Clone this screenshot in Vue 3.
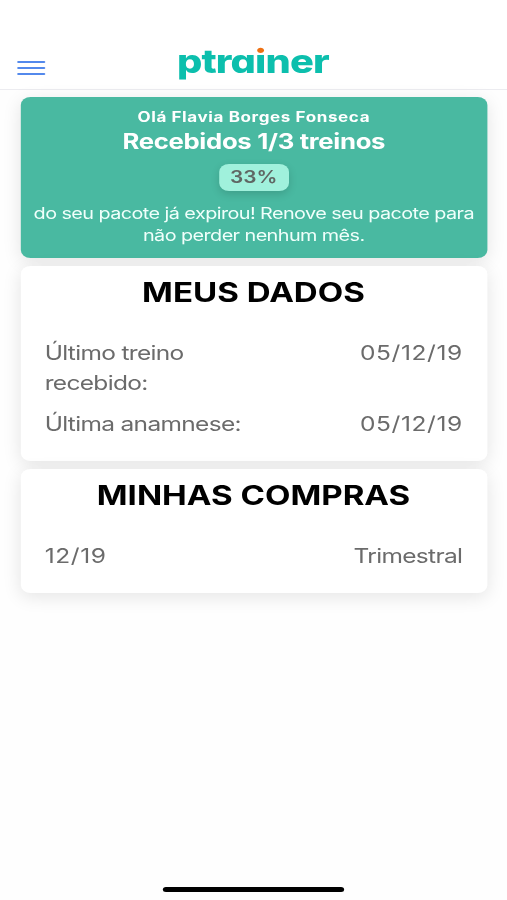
<template>
  <div class="screen">
    <header class="toolbar">
      <button class="menu-button" aria-label="Menu">
        <span v-for="i in 3" :key="i" class="menu-line"></span>
      </button>
      <div class="logo">ptra<span class="logo-i">i</span>ner</div>
    </header>

    <main class="content">
      <section class="card status-card">
        <div class="greeting">Olá {{ user.name }}</div>
        <div class="received">Recebidos {{ user.received }}/{{ user.total }} treinos</div>
        <div class="badge">{{ percent }}%</div>
        <p class="notice">do seu pacote já expirou! Renove seu pacote para não perder nenhum mês.</p>
      </section>

      <section v-for="section in sections" :key="section.title" class="card data-card">
        <h2>{{ section.title }}</h2>
        <div v-for="row in section.rows" :key="row.label" class="data-row">
          <span class="label" :class="{ numeric: isNumeric(row.label) }">{{ row.label }}</span>
          <span class="value" :class="{ numeric: isNumeric(row.value) }">{{ row.value }}</span>
        </div>
      </section>
    </main>

    <footer class="home-bar">
      <div class="home-indicator"></div>
    </footer>
  </div>
</template>

<script setup>
import { computed, reactive } from 'vue'

const user = reactive({
  name: 'Flavia Borges Fonseca',
  received: 1,
  total: 3
})

const percent = computed(() => Math.round((user.received / user.total) * 100))

const sections = [
  {
    title: 'MEUS DADOS',
    rows: [
      { label: 'Último treino recebido:', value: '05/12/19' },
      { label: 'Última anamnese:', value: '05/12/19' }
    ]
  },
  {
    title: 'MINHAS COMPRAS',
    rows: [{ label: '12/19', value: 'Trimestral' }]
  }
]

const isNumeric = (text) => /^[\d/]+$/.test(text)
</script>

<style>
body {
  margin: 0;
  background: #fff;
  overflow: hidden;
}
</style>

<style scoped>
.screen {
  display: flex;
  flex-direction: column;
  width: 414px;
  height: 900px;
  transform: scaleX(1.22464);
  transform-origin: 0 0;
  background: #fefefe;
  font-family: Inter, "Liberation Sans", sans-serif;
  overflow: hidden;
}

.toolbar {
  display: grid;
  grid-template-columns: 60px 1fr 60px;
  box-sizing: border-box;
  height: 90px;
  padding-top: 40px;
  border-bottom: 1px solid #ececf0;
  background: #fff;
}

.menu-button {
  display: flex;
  flex-direction: column;
  gap: 4px;
  width: 23px;
  margin: 21px 0 0 13.7px;
  padding: 0;
  border: none;
  background: none;
}

.menu-line {
  width: 23px;
  height: 2px;
  border-radius: 1px;
  background: #5389ec;
}

.logo {
  margin-top: 2px;
  color: #0cbfad;
  font-size: 32.5px;
  font-weight: 850;
  line-height: 40px;
  letter-spacing: -0.7px;
  text-indent: -1px;
  text-align: center;
  font-feature-settings: "cv11";
}

.logo-i {
  background: linear-gradient(#ee7012 0 13px, #0cbfad 13px);
  background-clip: text;
  -webkit-background-clip: text;
  color: transparent;
}

.content {
  display: flex;
  flex-direction: column;
  flex: 1;
  gap: 8px;
  padding: 7px 16px 0 16.5px;
}

.card {
  border-radius: 8px;
  box-shadow: 0 4px 16px rgba(0, 0, 0, 0.1);
}

.status-card {
  display: flex;
  flex-direction: column;
  align-items: center;
  box-sizing: border-box;
  height: 161px;
  padding-top: 11px;
  background: #49b9a1;
  color: #fff;
  text-align: center;
}

.greeting {
  font-size: 13.9px;
  font-weight: 700;
  line-height: 19px;
  letter-spacing: 0.5px;
}

.received {
  font-size: 21px;
  font-weight: 700;
  line-height: 30px;
  letter-spacing: -0.26px;
}

.badge {
  width: 57px;
  height: 27px;
  margin-top: 7px;
  border-radius: 8px;
  background: #a0f1dc;
  box-shadow: 0 3px 8px rgba(0, 0, 0, 0.15);
  color: #5f6663;
  font-size: 17px;
  font-weight: 600;
  line-height: 26px;
}

.notice {
  margin: 11px 0 0;
  padding: 0 8px;
  color: #f0fffb;
  font-size: 16.2px;
  line-height: 22px;
  letter-spacing: -0.47px;
}

.data-card {
  padding: 9px 20.5px 22px 20px;
  background: #fff;
}

.data-card:nth-child(2) {
  padding-bottom: 21px;
}

h2 {
  margin: 0 0 28px;
  color: #000;
  font-size: 27px;
  font-weight: 700;
  line-height: 36px;
  text-align: center;
  white-space: nowrap;
}

.data-row {
  display: flex;
  justify-content: space-between;
  color: #6b6b6b;
  font-size: 20px;
  line-height: 29.5px;
  letter-spacing: -0.55px;
}

.data-row + .data-row {
  margin-top: 12px;
}

.label {
  max-width: 170px;
}

.numeric {
  letter-spacing: 0.5px;
}

.value.numeric {
  margin-right: -0.5px;
}

.home-bar {
  display: flex;
  justify-content: center;
  height: 13px;
}

.home-indicator {
  width: 148px;
  height: 5px;
  border-radius: 3px;
  background: #000;
}
</style>
